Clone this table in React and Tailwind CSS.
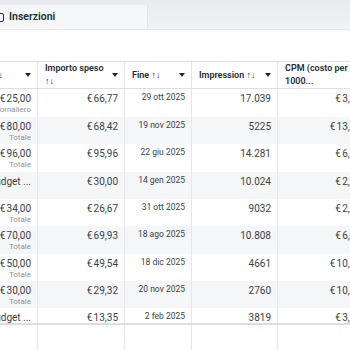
const COLS = [
  { key: 'budget', label: ['Budget ↑↓'], w: 'w-[89px] -ml-[51px]', pl: 'pl-[14px]' },
  { key: 'spent', label: ['Importo speso', '↑↓'], w: 'w-[87px]', pl: 'pl-[7px]' },
  { key: 'end', label: ['Fine ↑↓'], w: 'w-[67px]', pl: 'pl-[7px]' },
  { key: 'impr', label: ['Impression ↑↓'], w: 'w-[86px]', pl: 'pl-[7px]' },
  { key: 'cpm', label: ['CPM (costo per', '1000...'], w: 'w-[90px]', pl: 'pl-[7px]' },
]

const E = '€\u202F'

const ROWS = [
  { budget: E + '25,00', sub: 'Giornaliero', spent: E + '66,77', end: '29 ott 2025', impr: '17.039', cpm: E + '3,92', h: 'h-[28px]' },
  { budget: E + '80,00', sub: 'Totale', spent: E + '68,42', end: '19 nov 2025', impr: '5225', cpm: E + '13,09', h: 'h-[27px]' },
  { budget: E + '96,00', sub: 'Totale', spent: E + '95,96', end: '22 giu 2025', impr: '14.281', cpm: E + '6,72', h: 'h-[28px]' },
  { budget: 'Budget ...', sub: null, spent: E + '30,00', end: '14 gen 2025', impr: '10.024', cpm: E + '2,99', h: 'h-[27px]' },
  { budget: E + '34,00', sub: 'Totale', spent: E + '26,67', end: '31 ott 2025', impr: '9032', cpm: E + '2,95', h: 'h-[27px]' },
  { budget: E + '70,00', sub: 'Totale', spent: E + '69,93', end: '18 ago 2025', impr: '10.808', cpm: E + '6,47', h: 'h-[28px]' },
  { budget: E + '50,00', sub: 'Totale', spent: E + '49,54', end: '18 dic 2025', impr: '4661', cpm: E + '10,63', h: 'h-[27px]' },
  { budget: E + '30,00', sub: 'Totale', spent: E + '29,32', end: '20 nov 2025', impr: '2760', cpm: E + '10,62', h: 'h-[27px]' },
  { budget: 'Budget ...', sub: null, spent: E + '13,35', end: '2 feb 2025', impr: '3819', cpm: E + '3,50', h: 'h-[17px]' },
]

function Caret() {
  return (
    <svg width="6" height="4" viewBox="0 0 6 4" className="shrink-0">
      <path d="M0 0h6L3 4z" fill="#1c2b33" />
    </svg>
  )
}

function HeaderCell({ col }) {
  return (
    <div className={`${col.w} ${col.pl} shrink-0 h-full flex items-center justify-between pr-[6px] border-r border-[#e4e6eb]`}>
      <div className="flex flex-col">
        {col.label.map((l, i) => (
          <span key={i} className="text-[9px] leading-[13px] font-semibold text-[#1c2b33] whitespace-nowrap">{l}</span>
        ))}
      </div>
      {col.key !== 'cpm' && <Caret />}
    </div>
  )
}

function Cell({ col, row }) {
  const base = `${col.w} shrink-0 h-full border-r border-[#e4e6eb] pr-[6px] pt-[3px] flex flex-col items-end`
  if (col.key === 'budget') {
    return (
      <div className={base}>
        <span className="text-[10px] leading-[13px] text-[#3a3f45] whitespace-nowrap">{row.budget}</span>
        {row.sub && <span className="text-[8px] leading-[10px] text-[#8d949e]">{row.sub}</span>}
      </div>
    )
  }
  if (col.key === 'end') {
    return (
      <div className={base}>
        <span className="text-[8.5px] leading-[11px] text-[#3a3f45] whitespace-nowrap">{row.end}</span>
      </div>
    )
  }
  return (
    <div className={base}>
      <span className="text-[10px] leading-[13px] text-[#3a3f45] whitespace-nowrap">{row[col.key]}</span>
    </div>
  )
}

export default function App() {
  return (
    <div className="w-[350px] h-[350px] overflow-hidden bg-white font-['Roboto',sans-serif]">
      <div className="h-[30px] bg-gradient-to-b from-[#e9ebee] to-[#f0f2f5] border-b border-[#e6e8eb] flex items-end">
        <div className="w-[148px] h-[24px] bg-[#f6f7f9] border-r border-[#e2e5e9] flex items-center gap-[5px]">
          <div className="w-[9px] h-[9px] -ml-[5px] rounded-[2px] border border-[#1c2b33]" />
          <span className="text-[10.5px] font-semibold text-[#1c2b33]">Inserzioni</span>
        </div>
      </div>

      <div className="h-[31px]" />

      <div className="flex h-[28px] border-t border-b border-[#dddfe2]">
        {COLS.map(c => <HeaderCell key={c.key} col={c} />)}
      </div>

      {ROWS.map((row, i) => (
        <div
          key={i}
          className={`flex ${row.h} ${i % 2 === 1 ? 'bg-[#f5f6f7]' : 'bg-white'} ${i === ROWS.length - 1 ? 'border-b-2 border-[#dadde1]' : ''}`}
        >
          {COLS.map(c => <Cell key={c.key} col={c} row={row} />)}
        </div>
      ))}

      <div className="flex h-[40px]">
        {COLS.map(c => <div key={c.key} className={`${c.w} shrink-0 h-full border-r border-[#e4e6eb]`} />)}
      </div>
    </div>
  )
}
